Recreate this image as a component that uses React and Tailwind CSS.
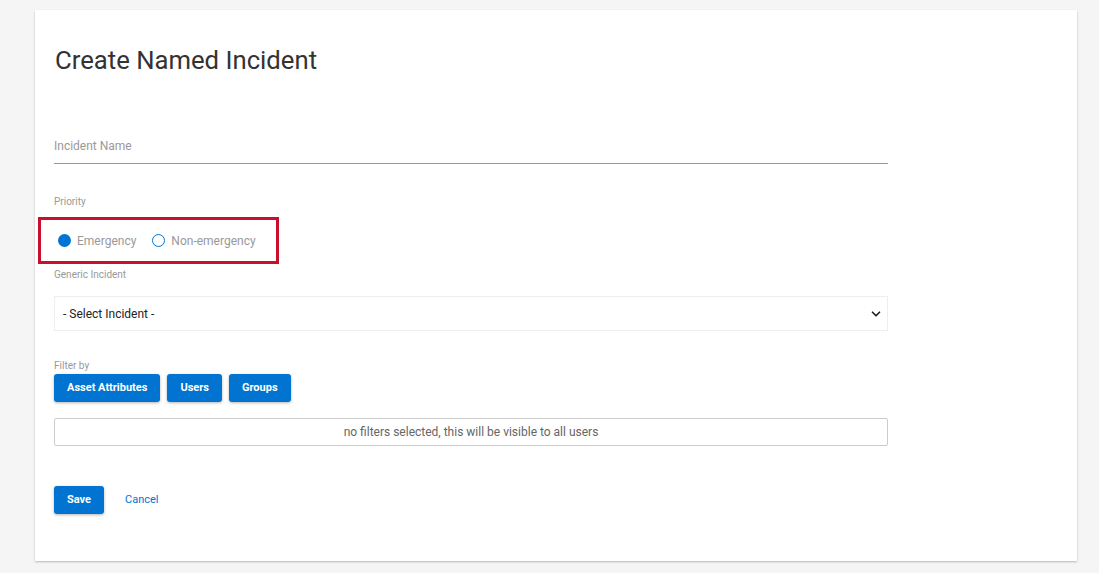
import { ChevronDown } from 'lucide-react'

const font = { fontFamily: 'Roboto, "Noto Sans", sans-serif' }

function Radio({ checked, label }) {
  return (
    <label className="flex items-center gap-[6px] cursor-pointer">
      <span
        className={
          checked
            ? 'w-[13px] h-[13px] rounded-full bg-[#0074d0]'
            : 'w-[13px] h-[13px] rounded-full border-[1.5px] border-[#0074d0] bg-white'
        }
      />
      <span className="text-[12px] text-[#999]">{label}</span>
    </label>
  )
}

function BlueButton({ children }) {
  return (
    <button className="h-[28px] px-[13px] rounded-[3px] bg-[#0074d0] text-white text-[11px] font-bold shadow-[0_1px_3px_rgba(0,0,0,0.3)]">
      {children}
    </button>
  )
}

export default function App() {
  return (
    <div className="min-h-[573px] bg-[#f5f5f5] pt-[10px] pl-[35px]" style={font}>
      <div className="w-[1042px] h-[551px] bg-white shadow-[0_1px_2px_rgba(0,0,0,0.25)] pl-[19px] pt-[34px]">
        <h1 className="text-[25.7px] leading-[32px] text-[#333] pl-px">Create Named Incident</h1>

        {/* Incident name */}
        <div className="w-[834px] mt-[57px] border-b border-[#999] pb-[6px]">
          <span className="text-[12px] text-[#999]">Incident Name</span>
        </div>

        {/* Priority */}
        <div className="mt-[31px] text-[10px] text-[#999] leading-[14px]">Priority</div>
        <div className="-ml-[16px] mt-[8px] w-[241px] h-[47px] border-[3px] border-[#c8102e] flex items-center gap-[16px] pl-[17px]">
          <Radio checked label="Emergency" />
          <Radio label="Non-emergency" />
        </div>

        {/* Generic incident */}
        <div className="mt-[4px] text-[10px] text-[#999] leading-[14px]">Generic Incident</div>
        <div className="mt-[14px] w-[834px] h-[35px] border border-[#eee] flex items-center justify-between pl-[8px] pr-[4px]">
          <span className="text-[12px] text-[#222]">- Select Incident -</span>
          <ChevronDown size={14} strokeWidth={3} className="text-[#222]" />
        </div>

        {/* Filter by */}
        <div className="mt-[28px] text-[10px] text-[#999] leading-[14px]">Filter by</div>
        <div className="flex gap-[7px] mt-[1px]">
          <BlueButton>Asset Attributes</BlueButton>
          <BlueButton>Users</BlueButton>
          <BlueButton>Groups</BlueButton>
        </div>
        <div className="mt-[16px] w-[834px] h-[28px] border border-[#ccc] rounded-[2px] flex items-center justify-center text-[12px] text-[#666]">
          no filters selected, this will be visible to all users
        </div>

        {/* Actions */}
        <div className="flex items-center gap-[21px] mt-[40px]">
          <BlueButton>Save</BlueButton>
          <a className="text-[11px] text-[#0074d0]">Cancel</a>
        </div>
      </div>
    </div>
  )
}
